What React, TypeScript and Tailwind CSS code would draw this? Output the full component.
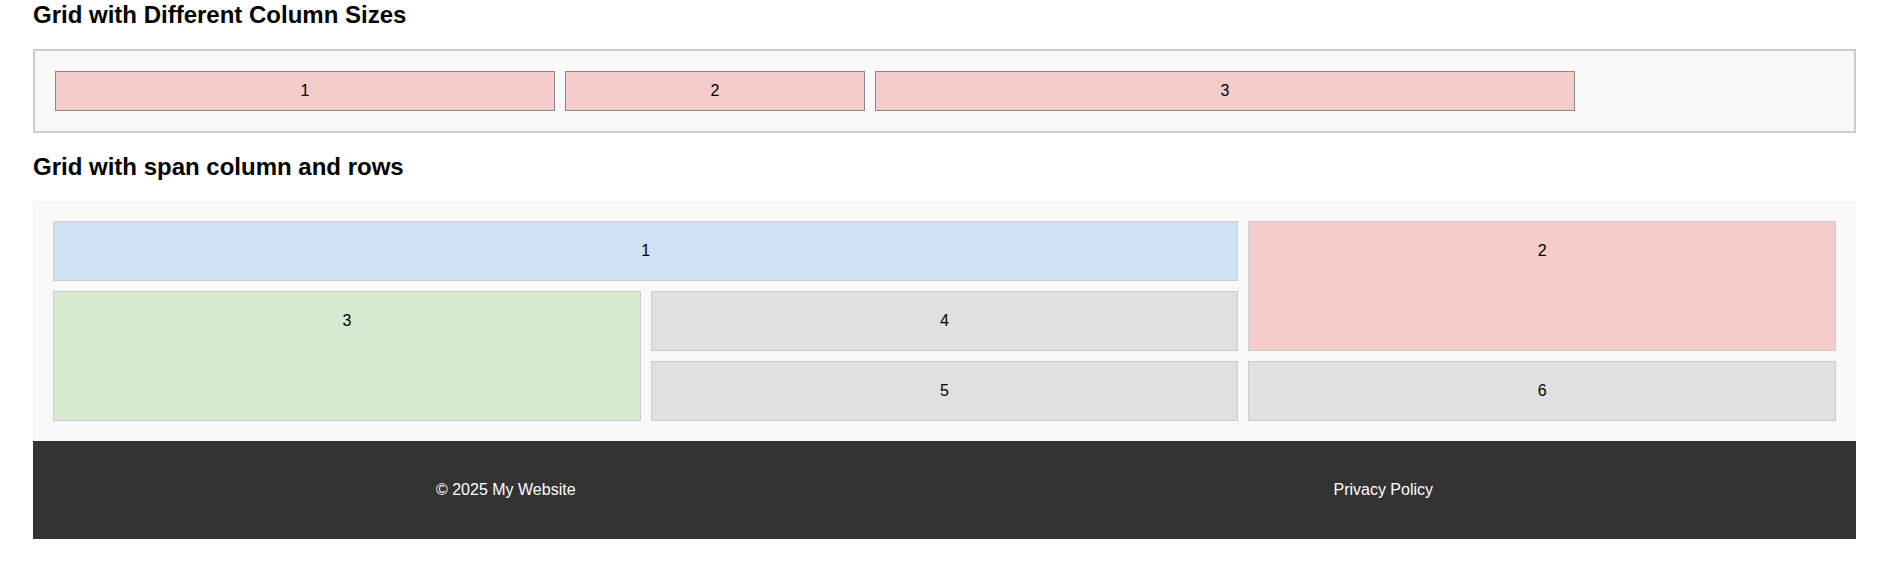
const sizedItems = ["1", "2", "3"];

type SpanItem = {
  label: string;
  className: string;
};

const spanItems: SpanItem[] = [
  { label: "1", className: "col-span-2 bg-[#cfe2f3]" },
  { label: "2", className: "row-span-2 bg-[#f4cccc]" },
  { label: "3", className: "row-span-2 bg-[#d9ead3]" },
  { label: "4", className: "bg-[#e0e0e0]" },
  { label: "5", className: "bg-[#e0e0e0]" },
  { label: "6", className: "bg-[#e0e0e0]" },
];

export default function App() {
  return (
    <div className="min-h-screen bg-white px-[33px] pt-[1px] font-['Liberation_Sans',Arial,sans-serif] text-[16px] text-black">
      <h2 className="mb-[20px] text-[24px] font-bold leading-[28px]">
        Grid with Different Column Sizes
      </h2>
      <div className="mb-[20px] border-2 border-[#ccc] bg-[#f9f9f9] p-[20px]">
        <div className="grid grid-cols-[500px_300px_700px] gap-[10px]">
          {sizedItems.map((n) => (
            <div
              key={n}
              className="border border-[#888] bg-[#f4cccc] p-[10px] text-center leading-[18px]"
            >
              {n}
            </div>
          ))}
        </div>
      </div>

      <h2 className="mb-[20px] text-[24px] font-bold leading-[28px]">
        Grid with span column and rows
      </h2>
      <div className="bg-[#f9f9f9] p-[20px]">
        <div className="grid grid-cols-3 auto-rows-[60px] gap-[10px]">
          {spanItems.map((item) => (
            <div
              key={item.label}
              className={`border border-[#ccc] p-[20px] text-center leading-[18px] ${item.className}`}
            >
              {item.label}
            </div>
          ))}
        </div>
      </div>

      <footer className="grid grid-cols-2 bg-[#333] px-[34px] py-[40px] leading-[18px] text-white">
        <p className="text-center">© 2025 My Website</p>
        <p className="text-center">Privacy Policy</p>
      </footer>
    </div>
  );
}
